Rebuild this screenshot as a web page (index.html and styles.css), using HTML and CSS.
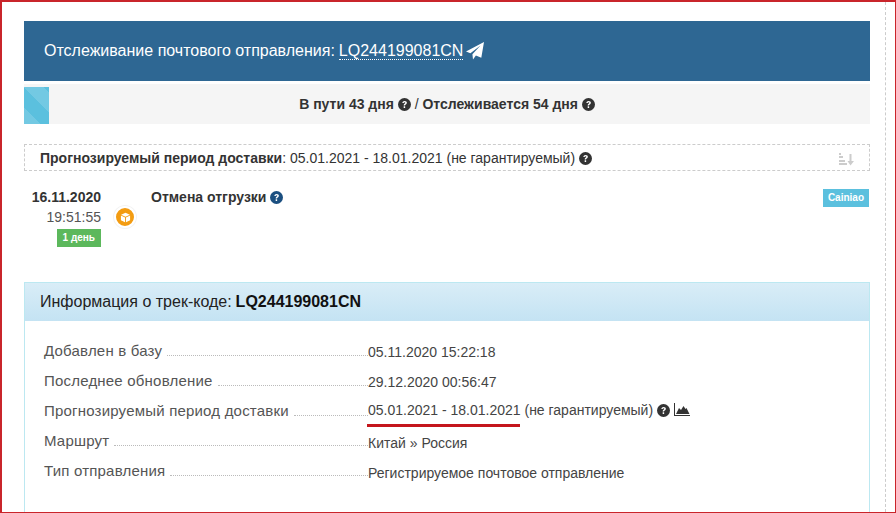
FILE: index.html
```html
<!DOCTYPE html>
<html lang="ru">
<head>
  <meta charset="UTF-8">
  <meta name="viewport" content="width=device-width, initial-scale=1.0">
  <title>Отслеживание почтового отправления</title>
  <link rel="stylesheet" href="styles.css">
</head>
<body>

<div class="frame">
  <div class="side-line"></div>

  <div class="container">
    <!-- Title bar -->
    <div class="title-bar">
      <span>Отслеживание почтового отправления:</span>
      <span class="track-link">LQ244199081CN</span>
      <svg class="plane-icon" viewBox="0 0 18 18" width="18" height="18"><path fill="#fff" d="M18 0 15.300 15.800 9.900 13.500 7 17.500 6.400 12.200 14.500 3.600 4.400 11.300 0 9.600z"/></svg>
    </div>

    <!-- Days bar -->
    <div class="days-bar">
      <div class="days-square"></div>
      <div class="days-text">
        <b>В пути 43 дня</b>
        <svg class="help-icon" viewBox="0 0 16 16"><circle cx="8" cy="8" r="8" fill="#333"/><path d="M5.300 6.200C5.500 4.600 6.600 3.700 8.200 3.700c1.600 0 2.700 1 2.700 2.200 0 1.100-.6 1.600-1.400 2.100-.6.4-.8.7-.8 1.300H7c0-1.100.3-1.700 1.100-2.300.6-.4.9-.6.9-1.100 0-.5-.4-.8-.9-.8-.6 0-1 .4-1.100 1.100zM7 10.300h1.800v1.900H7z" fill="#fff"/></svg>
        <span>/</span>
        <b>Отслеживается 54 дня</b>
        <svg class="help-icon" viewBox="0 0 16 16"><circle cx="8" cy="8" r="8" fill="#333"/><path d="M5.300 6.200C5.500 4.600 6.600 3.700 8.200 3.700c1.600 0 2.700 1 2.700 2.200 0 1.100-.6 1.600-1.400 2.100-.6.4-.8.7-.8 1.300H7c0-1.100.3-1.700 1.100-2.300.6-.4.9-.6.9-1.100 0-.5-.4-.8-.9-.8-.6 0-1 .4-1.100 1.100zM7 10.300h1.800v1.900H7z" fill="#fff"/></svg>
      </div>
    </div>

    <!-- Forecast -->
    <div class="forecast">
      <div>
        <b>Прогнозируемый период доставки</b>: 05.01.2021 - 18.01.2021 (не гарантируемый)
        <svg class="help-icon" viewBox="0 0 16 16"><circle cx="8" cy="8" r="8" fill="#333"/><path d="M5.300 6.200C5.500 4.600 6.600 3.700 8.200 3.700c1.600 0 2.700 1 2.700 2.200 0 1.100-.6 1.600-1.400 2.100-.6.4-.8.7-.8 1.300H7c0-1.100.3-1.700 1.100-2.300.6-.4.9-.6.9-1.100 0-.5-.4-.8-.9-.8-.6 0-1 .4-1.100 1.100zM7 10.300h1.800v1.900H7z" fill="#fff"/></svg>
      </div>
      <svg class="sort-icon" viewBox="0 0 16 14" width="16" height="14">
        <g fill="#ccc">
          <rect x="1" y="1" width="2" height="2"/><rect x="1" y="4" width="4" height="2"/>
          <rect x="1" y="8" width="6" height="2"/><rect x="1" y="11" width="8" height="2"/>
          <path d="M11.500 2h2v7H16l-3.500 4.500L9.500 9h2z"/>
        </g>
      </svg>
    </div>

    <!-- Timeline -->
    <div class="event">
      <div class="event-date">
        <b>16.11.2020</b>
        <span class="event-time">19:51:55</span>
        <span class="day-badge">1 день</span>
      </div>
      <div class="event-dot">
        <svg viewBox="0 0 12 12" width="11" height="11"><path fill="#fff" d="M6 .8 10.800 3 6 5.200 1.200 3zM1 3.800l4.500 2.100v5.300L1 9zM11 3.800 6.500 5.900v5.300L11 9z"/></svg>
      </div>
      <div class="event-title">
        <b>Отмена отгрузки</b>
        <svg class="help-icon" viewBox="0 0 16 16"><circle cx="8" cy="8" r="8" fill="#1b4f80"/><path d="M5.300 6.200C5.500 4.600 6.600 3.700 8.200 3.700c1.600 0 2.700 1 2.700 2.200 0 1.100-.6 1.600-1.400 2.100-.6.4-.8.7-.8 1.300H7c0-1.100.3-1.700 1.100-2.300.6-.4.9-.6.9-1.100 0-.5-.4-.8-.9-.8-.6 0-1 .4-1.100 1.100zM7 10.300h1.800v1.900H7z" fill="#fff"/></svg>
      </div>
      <span class="source-badge">Cainiao</span>
    </div>

    <!-- Info panel -->
    <div class="panel">
      <div class="panel-head">Информация о трек-коде: <b>LQ244199081CN</b></div>
      <div class="panel-body">
        <div class="info-row">
          <span class="info-label">Добавлен в базу</span><span class="info-dots"></span>
          <span class="info-value value-low1">05.11.2020 15:22:18</span>
        </div>
        <div class="info-row">
          <span class="info-label">Последнее обновление</span><span class="info-dots"></span>
          <span class="info-value value-low1">29.12.2020 00:56:47</span>
        </div>
        <div class="info-row">
          <span class="info-label">Прогнозируемый период доставки</span><span class="info-dots"></span>
          <span class="info-value value-high">
            05.01.2021 - 18.01.2021 (не гарантируемый)
            <svg class="help-icon" viewBox="0 0 16 16"><circle cx="8" cy="8" r="8" fill="#333"/><path d="M5.300 6.200C5.500 4.600 6.600 3.700 8.200 3.700c1.600 0 2.700 1 2.700 2.200 0 1.100-.6 1.600-1.400 2.100-.6.4-.8.7-.8 1.300H7c0-1.100.3-1.700 1.100-2.300.6-.4.9-.6.9-1.100 0-.5-.4-.8-.9-.8-.6 0-1 .4-1.100 1.100zM7 10.300h1.800v1.900H7z" fill="#fff"/></svg>
            <svg class="chart-icon" viewBox="0 0 16 13" width="16" height="13"><path fill="#333" d="M0 0h1v12h15v1H0zM2 11l3-6 2 2 2.500-4 2 3 1-1 3 6z"/></svg>
          </span>
          <span class="red-mark"></span>
        </div>
        <div class="info-row">
          <span class="info-label">Маршрут</span><span class="info-dots"></span>
          <span class="info-value value-low2">Китай » Россия</span>
        </div>
        <div class="info-row">
          <span class="info-label">Тип отправления</span><span class="info-dots"></span>
          <span class="info-value value-low2">Регистрируемое почтовое отправление</span>
        </div>
      </div>
    </div>
  </div>
</div>

</body>
</html>
```
FILE: styles.css
```css
html, body {
  margin: 0;
  padding: 0;
  height: 513px;
  overflow: hidden;
}

body {
  font-family: "Liberation Sans", Arial, sans-serif;
  font-size: 14px;
  line-height: 20px;
  color: #333;
  background-color: #fff;
}

.frame {
  position: relative;
  height: 513px;
  box-sizing: border-box;
  border: 1px solid #c9252b;
  border-top-width: 2px;
  border-left-width: 2px;
  overflow: hidden;
}

.side-line {
  position: absolute;
  top: 0;
  bottom: 0;
  left: 883px;
  border-left: 1px dashed #ccc;
}

.container {
  width: 846px;
  margin-left: 22px;
  padding-top: 19px;
}

.title-bar {
  display: flex;
  align-items: center;
  height: 60px;
  padding-left: 20px;
  background-color: #2e6793;
  color: #fff;
  font-size: 16px;
}

.track-link {
  margin-left: 4px;
  border-bottom: 1px dotted #fff;
  line-height: 17px;
}

.plane-icon {
  margin-left: 3px;
}

.days-bar {
  display: flex;
  align-items: flex-end;
  height: 40px;
  margin-top: 3px;
  background-color: #f5f5f5;
}

.days-square {
  width: 25px;
  height: 37px;
  background-color: #5bc0de;
  background-image: linear-gradient(45deg, rgba(255,255,255,.15) 25%, transparent 25%, transparent 50%, rgba(255,255,255,.15) 50%, rgba(255,255,255,.15) 75%, transparent 75%);
  background-size: 40px 40px;
}

.days-text {
  flex: 1;
  align-self: center;
  text-align: center;
  padding-right: 25px;
}

.help-icon {
  width: 13px;
  height: 13px;
  vertical-align: -2px;
}

.forecast {
  display: flex;
  align-items: center;
  justify-content: space-between;
  height: 27px;
  box-sizing: border-box;
  margin-top: 20px;
  padding: 0 15px;
  border: 1px dashed #ccc;
}

.sort-icon {
  margin-top: 3px;
}

.event {
  display: flex;
  position: relative;
  height: 111px;
}

.event-date {
  display: flex;
  flex-direction: column;
  align-items: flex-end;
  width: 77px;
  padding-top: 16px;
}

.event-time {
  color: #555;
}

.day-badge {
  margin-top: 2px;
  padding: 0 6px;
  line-height: 18px;
  font-size: 10px;
  font-weight: bold;
  color: #fff;
  background-color: #5cb85c;
}

.event-dot {
  display: flex;
  align-items: center;
  justify-content: center;
  width: 18px;
  height: 18px;
  margin: 35px 0 0 13px;
  border: 2px solid #fff;
  border-radius: 50%;
  background-color: #f39c12;
  box-shadow: 0 0 0 1px #f3f3f3;
}

.event-title {
  margin: 16px 0 0 15px;
}

.source-badge {
  position: absolute;
  right: 1px;
  top: 18px;
  padding: 0 5px;
  line-height: 18px;
  font-size: 10px;
  font-weight: bold;
  color: #fff;
  background-color: #5bc0de;
}

.panel {
  border: 1px solid #bce8f1;
  border-bottom: none;
  height: 240px;
}

.panel-head {
  display: flex;
  align-items: center;
  gap: 4px;
  height: 38px;
  padding-left: 15px;
  background-image: linear-gradient(#d9edf7, #c4e3f3);
  color: #222;
  font-size: 16px;
}

.panel-head b {
  color: #111;
}

.panel-body {
  padding: 10px 19px 0;
}

.info-row {
  display: flex;
  align-items: flex-end;
  position: relative;
  height: 30px;
}

.info-label {
  flex: none;
  color: #555;
  font-size: 15px;
  letter-spacing: .2px;
}

.info-dots {
  flex: 1;
  margin: 0 0 5px 5px;
  border-bottom: 1px dotted #bbb;
}

.info-value {
  flex: none;
  width: 482px;
  color: #444;
}

.value-low1 {
  margin-bottom: -1px;
}

.value-low2 {
  margin-bottom: -2px;
}

.value-high {
  margin-bottom: 1px;
}

.chart-icon {
  vertical-align: -1px;
}

.red-mark {
  position: absolute;
  left: 323px;
  bottom: -6px;
  width: 153px;
  height: 3px;
  background-color: #c4161c;
}
```
